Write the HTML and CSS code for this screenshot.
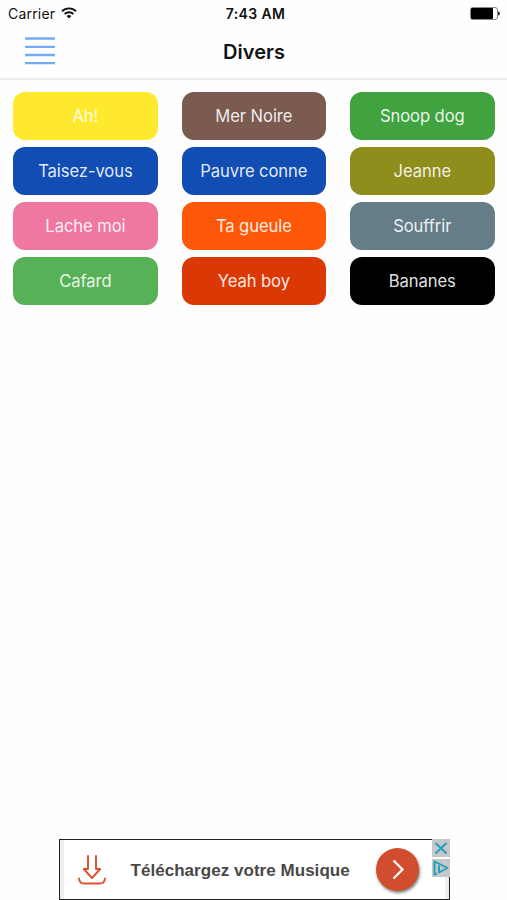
FILE: index.html
```html
<!DOCTYPE html>
<html lang="fr">
<head>
    <meta charset="UTF-8">
    <meta name="viewport" content="width=device-width, initial-scale=1.0">
    <title>Divers</title>
    <link rel="stylesheet" href="styles.css">
</head>
<body>
    <div class="app">
        <div class="status-bar">
            <div class="carrier">
                <span>Carrier</span>
                <svg class="wifi" width="16" height="12" viewBox="0 0 16 12" fill="none" stroke="#111" stroke-width="1.9">
                    <path d="M1 4.2a10 10 0 0 1 14 0"/>
                    <path d="M3.6 7a6.3 6.3 0 0 1 8.8 0"/>
                    <path d="M5.6 9.1a3.4 3.4 0 0 1 4.8 0L8 11.6z" fill="#111" stroke="none"/>
                </svg>
            </div>
            <div class="time">7:43 AM</div>
            <div class="battery">
                <svg width="30" height="13" viewBox="0 0 30 13">
                    <rect x=".5" y=".5" width="27" height="12" rx="2.5" fill="#fff" stroke="#888"/>
                    <rect x="1" y="1" width="22" height="11" rx="1" fill="#000"/>
                    <path d="M28 4.5a2 2 0 0 1 0 4z" fill="#333"/>
                </svg>
            </div>
        </div>

        <header class="navbar">
            <button class="menu-btn" aria-label="Menu">
                <svg width="30" height="28" viewBox="0 0 30 28" stroke="#74aaf8" stroke-width="2.3">
                    <path d="M0 1.5h30M0 9.8h30M0 18h30M0 26.2h30"/>
                </svg>
            </button>
            <h1>Divers</h1>
        </header>

        <main class="sounds">
            <button class="sound yellow">Ah!</button>
            <button class="sound brown">Mer Noire</button>
            <button class="sound green">Snoop dog</button>
            <button class="sound blue">Taisez-vous</button>
            <button class="sound blue">Pauvre conne</button>
            <button class="sound olive">Jeanne</button>
            <button class="sound pink">Lache moi</button>
            <button class="sound orange">Ta gueule</button>
            <button class="sound slate">Souffrir</button>
            <button class="sound light-green">Cafard</button>
            <button class="sound red">Yeah boy</button>
            <button class="sound black">Bananes</button>
        </main>

        <div class="ad">
            <svg class="ad-download" width="28" height="30" viewBox="0 0 28 30" fill="none" stroke="#d9512f" stroke-width="1.9" stroke-linecap="round" stroke-linejoin="round">
                <path d="M10 1v13H5.8l8.2 9 8.2-9H18V1"/>
                <path d="M1 23.5c.4 3.8 2.2 5 5 5h16c2.800 0 4.600-1.200 5-5"/>
            </svg>
            <span class="ad-text">Téléchargez votre Musique</span>
            <div class="ad-go">
                <svg width="43" height="43" viewBox="0 0 43 43" fill="none" stroke="#fff" stroke-width="2.3">
                    <path d="M17.5 12.5l9 9-9 9"/>
                </svg>
            </div>
            <div class="ad-choices">
                <svg width="18" height="18" viewBox="0 0 18 18" fill="none" stroke="#1d9fbd" stroke-width="1.8">
                    <path d="M3.5 4l11 10.5M14.5 4l-11 10.5"/>
                </svg>
                <svg width="18" height="18" viewBox="0 0 18 18" fill="none" stroke="#1d9fbd" stroke-width="1.9" stroke-linejoin="round">
                    <path d="M5 14.6l-2.5.9V2.5L15.500 9 7 13.500V6.500"/>
                </svg>
            </div>
        </div>
    </div>
</body>
</html>
```

FILE: styles.css
```css
* {
    box-sizing: border-box;
}
body {
    margin: 0;
    background: #fefefe;
    font-family: Inter, Roboto, sans-serif;
    color: #111;
}
button {
    border: none;
    padding: 0;
    font-family: inherit;
    cursor: pointer;
}
svg {
    display: block;
}
.app {
    display: flex;
    flex-direction: column;
    width: 507px;
    height: 900px;
    overflow: hidden;
}
.status-bar {
    display: grid;
    grid-template-columns: 1fr auto 1fr;
    align-items: center;
    height: 27px;
    padding: 0 7px 0 8px;
    font-size: 14px;
    line-height: 18px;
}
.carrier {
    display: flex;
    align-items: center;
    gap: 6px;
    letter-spacing: 0.2px;
}
.wifi {
    margin-top: -2px;
}
.time {
    padding-left: 3px;
    font-weight: 600;
    letter-spacing: 0.4px;
}
.battery {
    justify-self: end;
}
.navbar {
    display: grid;
    grid-template-columns: 55px 1fr 55px;
    align-items: center;
    height: 53px;
    border-bottom: 2px solid #ebebeb;
}
.navbar h1 {
    margin: -1px 0 0 1px;
    text-align: center;
    font-size: 20px;
    font-weight: 600;
}
.menu-btn {
    width: 30px;
    margin: -3px 0 0 25px;
    background: none;
}
.sounds {
    display: grid;
    grid-template-columns: repeat(3, 1fr);
    grid-auto-rows: 48.5px;
    gap: 6.5px 24px;
    padding: 11.5px 12.5px 0 13.2px;
}
.sound {
    border-radius: 12px;
    color: rgba(255, 255, 255, 0.9);
    font-size: 16.6px;
    letter-spacing: -0.08px;
}
.yellow { background: #ffe92e; }
.brown { background: #7b5a50; }
.green { background: #41a340; }
.blue { background: #124db3; }
.olive { background: #8f8d1c; }
.pink { background: #ef78a3; }
.orange { background: #ff5808; }
.slate { background: #647d88; }
.light-green { background: #57b157; }
.red { background: #da3905; }
.black { background: #000; }

.ad {
    position: relative;
    display: flex;
    align-items: center;
    width: 391px;
    height: 61px;
    margin: auto 0 0 58.5px;
    padding-left: 18px;
    border: 1px solid #222;
    background: #fff;
    box-shadow: inset 4px 0 0 #eee, inset -4px 0 0 #eee;
}
.ad-text {
    margin: 2px 0 0 25px;
    color: #484848;
    font-family: "Liberation Sans", Arial, sans-serif;
    font-size: 17px;
    font-weight: bold;
    letter-spacing: 0.04px;
    white-space: nowrap;
}
.ad-go {
    margin-left: 26px;
    border-radius: 50%;
    background: #d24c2e;
    box-shadow: 1px 2px 3px rgba(0, 0, 0, 0.5);
}
.ad-choices {
    position: absolute;
    top: -1px;
    right: -1px;
    display: grid;
    gap: 2px;
    background: #fff;
}
.ad-choices svg {
    background: #c5c7c8;
}
```
